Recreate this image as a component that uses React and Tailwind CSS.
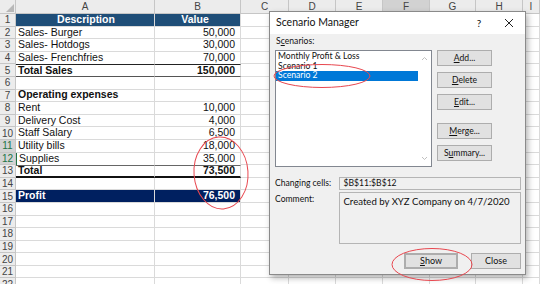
import React from 'react'

const cols = [
  { k: 'A', w: 'w-[139px]' },
  { k: 'B', w: 'w-[86px]' },
  { k: 'C', w: 'w-[48px]' },
  { k: 'D', w: 'w-[47px]' },
  { k: 'E', w: 'w-[47px]' },
  { k: 'F', w: 'w-[47px]' },
  { k: 'G', w: 'w-[46px]' },
  { k: 'H', w: 'w-[47px]' },
  { k: 'I', w: 'w-[17px]' },
]

const rows = [
  { n: 1, a: 'Description', b: 'Value', kind: 'head' },
  { n: 2, a: 'Sales- Burger', b: '50,000' },
  { n: 3, a: 'Sales- Hotdogs', b: '30,000' },
  { n: 4, a: 'Sales- Frenchfries', b: '70,000' },
  { n: 5, a: 'Total Sales', b: '150,000', kind: 'total' },
  { n: 6 },
  { n: 7, a: 'Operating expenses', bold: true },
  { n: 8, a: 'Rent', b: '10,000' },
  { n: 9, a: 'Delivery Cost', b: '4,000' },
  { n: 10, a: 'Staff Salary', b: '6,500' },
  { n: 11, a: 'Utility bills', b: '18,000', sel: true },
  { n: 12, a: 'Supplies', b: '35,000', sel: true },
  { n: 13, a: 'Total', b: '73,500', kind: 'total2' },
  { n: 14 },
  { n: 15, a: 'Profit', b: '76,500', kind: 'profit' },
  { n: 16 }, { n: 17 }, { n: 18 }, { n: 19 }, { n: 20 }, { n: 21 }, { n: 22 },
]

function Row({ r }) {
  const head = r.kind === 'head'
  const profit = r.kind === 'profit'
  const fill = head ? 'bg-[#1f4e78] text-white font-bold' : profit ? 'bg-[#002060] text-white font-bold' : ''
  let edge = 'border-b border-[#dadada]'
  if (r.kind === 'total') edge = 'border-t border-t-[#222] border-b border-b-[#555]'
  if (r.kind === 'total2') edge = 'border-t border-t-[#666] border-b-2 border-b-[#111]'
  if (r.n === 4 || r.n === 12) edge = ''
  const bold = r.bold || r.kind === 'total' || r.kind === 'total2'
  return (
    <div className="flex h-[12.6px] shrink-0">
      <div className={`w-[16px] shrink-0 flex items-center justify-center border-r border-b border-[#c6c6c6] ${r.sel ? 'bg-[#d3d3d3] text-[#217346]' : 'bg-[#ececec] text-[#444]'} text-[10px]`}>
        {r.n}
      </div>
      <div className={`w-[139px] shrink-0 flex items-center pl-[2px] border-r border-[#dadada] box-border whitespace-nowrap ${fill} ${edge} ${bold ? 'font-bold' : ''} ${head ? 'justify-center' : ''} ${r.n === 12 ? 'border-l border-l-[#217346]' : ''}`}>
        {r.a}
      </div>
      <div className={`w-[86px] shrink-0 flex items-center pr-[5px] border-r border-[#dadada] box-border ${fill} ${edge} ${bold ? 'font-bold' : ''} ${head ? 'justify-center pr-0' : 'justify-end'}`}>
        {r.b}
      </div>
      {cols.slice(2).map((c) => (
        <div key={c.k} className={`${c.w} shrink-0 border-r border-b border-[#dadada]`} />
      ))}
    </div>
  )
}

function Btn({ children, className = '' }) {
  return (
    <div className={`h-[16px] flex items-center justify-center bg-[#e1e1e1] border border-[#adadad] ${className}`}>
      {children}
    </div>
  )
}

function Dialog() {
  return (
    <div className="absolute left-[269px] top-[11px] w-[257px] h-[264px] bg-[#f0f0f0] border border-[#8a8a8a] shadow-[2px_3px_6px_rgba(0,0,0,0.3)] flex flex-col text-[8.6px] text-[#111] font-['Lato',sans-serif] whitespace-nowrap">
      <div className="h-[22px] bg-white flex items-center pl-[6px] shrink-0 text-[10.5px]">
        <span className="flex-1">Scenario Manager</span>
        <span className="w-[12px] text-center mr-[19px] text-[10px]">?</span>
        <svg width="10" height="10" viewBox="0 0 10 10" className="mr-[11px]">
          <path d="M1 1L9 9M9 1L1 9" stroke="#222" strokeWidth="1" />
        </svg>
      </div>
      <div className="pl-[5px] pr-[4px] flex flex-col">
        <div className="h-[14px] flex items-center pl-[1px]">S<u>c</u>enarios:</div>
        <div className="flex mt-[2px] gap-[5px]">
          <div className="w-[157px] h-[117px] bg-white border border-[#828790] flex">
            <div className="flex-1 pt-[1px]">
              <div className="pl-[2px] h-[9.5px] leading-[9.5px]">Monthly Profit &amp; Loss</div>
              <div className="pl-[2px] h-[9.5px] leading-[9.5px]">Scenario 1</div>
              <div className="pl-[2px] h-[9.5px] leading-[9.5px] bg-[#0078d7] text-white">Scenario 2</div>
            </div>
            <div className="w-[13px] flex flex-col justify-between items-center py-[5px]">
              <svg width="7" height="5" viewBox="0 0 7 5"><path d="M1 4L3.5 1.5L6 4" stroke="#c0c0c0" fill="none" /></svg>
              <svg width="7" height="5" viewBox="0 0 7 5"><path d="M1 1L3.5 3.5L6 1" stroke="#c0c0c0" fill="none" /></svg>
            </div>
          </div>
          <div className="w-[55px] flex flex-col">
            <Btn><u>A</u>dd...</Btn>
            <Btn className="mt-[6px]"><u>D</u>elete</Btn>
            <Btn className="mt-[6px]"><u>E</u>dit...</Btn>
            <Btn className="mt-[13px]"><u>M</u>erge...</Btn>
            <Btn className="mt-[6px]">S<u>u</u>mmary...</Btn>
          </div>
        </div>
        <div className="flex mt-[10px] items-center">
          <span className="w-[65px]">Changing cells:</span>
          <div className="w-[183px] h-[13px] border border-[#b5b5b5] bg-[#f0f0f0] flex items-center pl-[3px]">$B$11:$B$12</div>
        </div>
        <div className="flex mt-[2px]">
          <span className="w-[65px] pt-[1px]">Comment:</span>
          <div className="w-[183px] h-[52px] border border-[#b5b5b5] bg-[#f0f0f0] pl-[3px] pt-[2px] text-[9.6px]">Created by XYZ Company on 4/7/2020</div>
        </div>
        <div className="flex justify-end mt-[9px] gap-[13px] text-[9px]">
          <Btn className="w-[54px] border-[#0078d7] border-2"><u>S</u>how</Btn>
          <Btn className="w-[50px]">Close</Btn>
        </div>
      </div>
    </div>
  )
}

export default function App() {
  return (
    <div className="relative w-[540px] h-[284px] overflow-hidden bg-white font-['Liberation_Sans',sans-serif] text-[10.5px] text-[#111]">
      <div className="flex flex-col">
        <div className="flex h-[14px] shrink-0 text-[10px] text-[#444]">
          <div className="w-[16px] bg-[#ececec] border-r border-b border-[#c6c6c6] relative">
            <svg width="8" height="8" viewBox="0 0 8 8" className="absolute right-[1px] bottom-[1px]"><path d="M8 0L8 8L0 8Z" fill="#b8b8b8" /></svg>
          </div>
          {cols.map((c) => (
            <div key={c.k} className={`${c.w} shrink-0 flex items-center justify-center border-r border-b border-[#c6c6c6] ${c.k === 'F' ? 'bg-[#d2d2d2]' : 'bg-[#ececec]'}`}>
              {c.k}
            </div>
          ))}
        </div>
        {rows.map((r) => <Row key={r.n} r={r} />)}
      </div>
      <Dialog />
      <svg className="absolute left-0 top-0 pointer-events-none" width="540" height="284">
        <ellipse cx="221" cy="173" rx="27" ry="36" fill="none" stroke="#e8474f" strokeWidth="1" transform="rotate(-4 221 173)" />
        <ellipse cx="322" cy="76" rx="48" ry="11.5" fill="none" stroke="#e8474f" strokeWidth="1" />
        <ellipse cx="432" cy="264.5" rx="40" ry="16" fill="none" stroke="#e8474f" strokeWidth="1" />
      </svg>
    </div>
  )
}
